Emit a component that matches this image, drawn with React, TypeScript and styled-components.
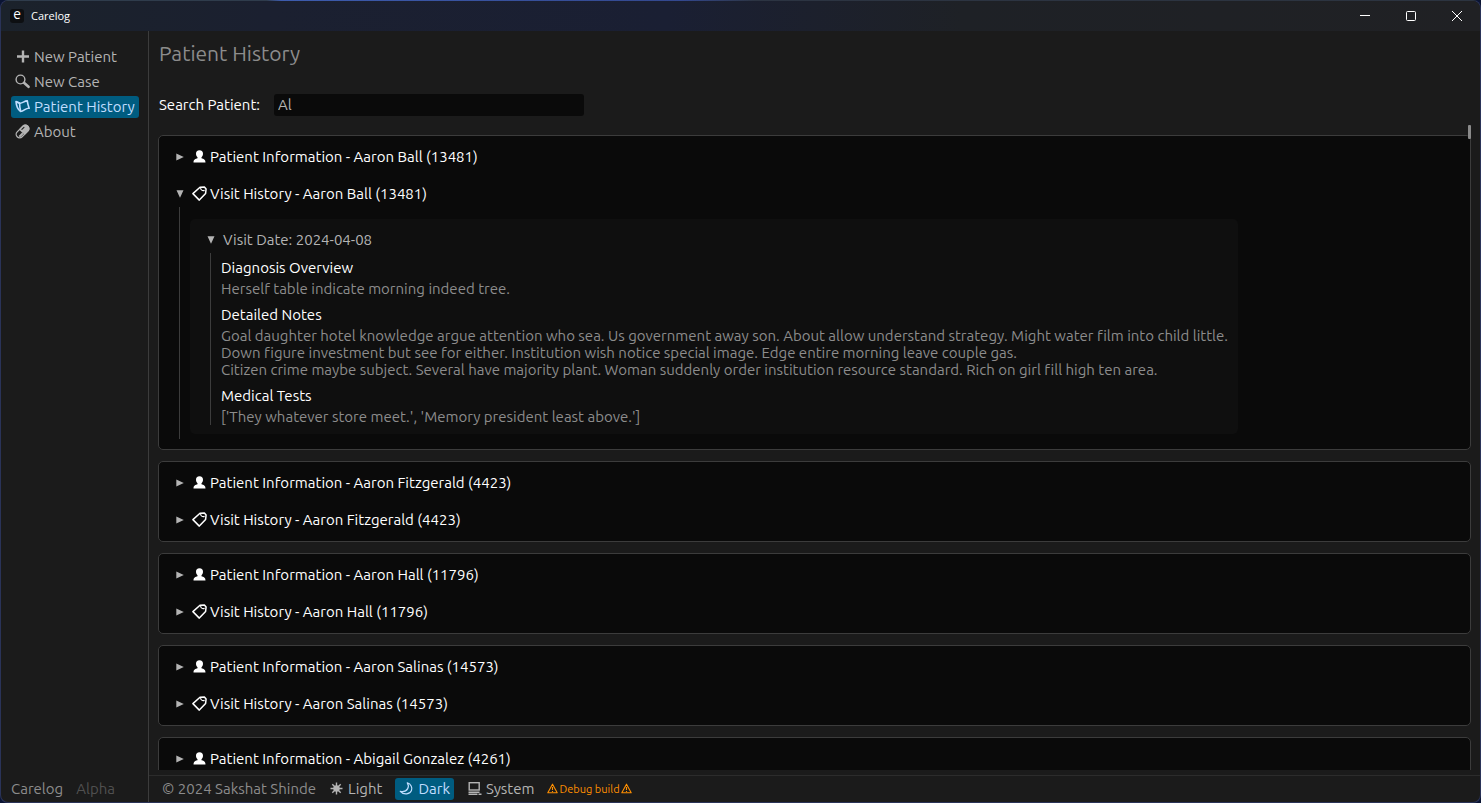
import React, { useState } from 'react';
import styled, { createGlobalStyle, css } from 'styled-components';

const color = {
  panel: '#1b1b1b',
  card: '#0a0a0a',
  inset: '#0f0f0f',
  line: '#3c3c3c',
  text: '#b4b4b4',
  weak: '#8c8c8c',
  faint: '#505050',
  strong: '#ffffff',
  accent: '#005c80',
  accentText: '#c0deff',
  warn: '#ff8f00',
};

const GlobalStyle = createGlobalStyle`
  * { box-sizing: border-box; }
  body {
    margin: 0;
    background: #0a1433;
    font: 400 15px/22px Ubuntu, "Noto Sans", sans-serif;
    font-variant-ligatures: none;
    color: ${color.text};
  }
  h1, h2, h3, p { margin: 0; font-weight: inherit; }
  button, input { font: inherit; color: inherit; border: 0; margin: 0; }
`;

const Window = styled.div`
  display: flex;
  flex-direction: column;
  height: 100vh;
  overflow: hidden;
  border: 1px solid transparent;
  border-radius: 8px;
  background:
    linear-gradient(${color.panel}, ${color.panel}) padding-box,
    linear-gradient(90deg, #2f3c4c 18%, #3d5cae 19%, #33488f 46%, #2c3442 51%, #2c3440) top / 100% 1px no-repeat border-box,
    #2a3358 border-box;
`;

const TitleBar = styled.header`
  display: flex;
  align-items: center;
  flex: none;
  height: 30px;
  padding-left: 9px;
  background: linear-gradient(90deg, #1b222b 0%, #1b2030 18%, #1a1f33 45%, #1e2126 65%, #202124 100%);
  color: ${color.strong};
`;

const AppBadge = styled.span`
  display: flex;
  justify-content: center;
  width: 14px;
  height: 14px;
  margin-right: 7px;
  border-radius: 3px;
  background: #0d0f12;
  font-size: 14px;
  line-height: 11px;
`;

const AppTitle = styled.span`
  flex: 1;
  font: 400 11px/16px "Open Sans", "Noto Sans", sans-serif;
`;

const WindowButton = styled.button`
  display: grid;
  place-items: center;
  width: 46px;
  height: 30px;
  padding: 0;
  background: none;
`;

const Body = styled.div`
  display: flex;
  flex: 1;
  min-height: 0;
`;

const Sidebar = styled.nav`
  display: flex;
  flex-direction: column;
  flex: none;
  width: 148px;
  padding: 15px 8px 2px 10px;
  border-right: 1px solid ${color.line};
`;

const NavList = styled.div`
  display: flex;
  flex: 1;
  flex-direction: column;
  align-items: flex-start;
  gap: 3px;
`;

const Selectable = styled.button<{ $on?: boolean }>`
  display: flex;
  align-items: center;
  gap: 4px;
  height: 22px;
  padding: 0 4px;
  border-radius: 3px;
  background: none;
  white-space: nowrap;
  ${(p) =>
    p.$on &&
    css`
      background: ${color.accent};
      color: ${color.accentText};
    `}
`;

const Version = styled.div`
  display: flex;
  gap: 13px;
  color: ${color.weak};
`;

const Faint = styled.span`
  color: ${color.faint};
`;

const Main = styled.main`
  display: flex;
  flex: 1;
  flex-direction: column;
  min-width: 0;
`;

const Heading = styled.h1`
  flex: none;
  padding: 8px 10px 0;
  font-size: 21px;
  line-height: 28px;
  color: ${color.weak};
`;

const SearchRow = styled.div`
  display: flex;
  align-items: center;
  flex: none;
  gap: 14px;
  padding: 27px 10px 0;
  color: ${color.strong};
`;

const SearchInput = styled.input`
  width: 310px;
  height: 22px;
  padding: 0 4px;
  border-radius: 3px;
  outline: none;
  background: ${color.card};
  color: ${color.text};
`;

const Results = styled.div`
  position: relative;
  display: flex;
  flex: 1;
  flex-direction: column;
  min-height: 0;
  margin-top: 9px;
`;

const CardList = styled.div`
  display: flex;
  flex: 1;
  flex-direction: column;
  gap: 11px;
  min-height: 0;
  padding: 10px 9px 0;
  overflow-y: auto;
  scrollbar-width: none;
`;

const ScrollThumb = styled.div`
  position: absolute;
  top: 0;
  right: 9px;
  width: 3px;
  height: 14px;
  border-radius: 1px;
  background: #8a8a8a;
`;

const Card = styled.section`
  display: flex;
  flex: none;
  flex-direction: column;
  gap: 15px;
  padding: 10px 17px;
  border: 1px solid ${color.line};
  border-radius: 5px;
  background: ${color.card};
`;

const Toggle = styled.button<{ $quiet?: boolean }>`
  display: flex;
  align-items: center;
  height: 22px;
  padding: 0;
  background: none;
  color: ${(p) => (p.$quiet ? color.text : color.strong)};
  white-space: nowrap;
`;

const Arrow = styled.svg<{ $open: boolean }>`
  flex: none;
  width: 8px;
  height: 8px;
  margin-right: 8px;
  transform: rotate(${(p) => (p.$open ? '90deg' : '0deg')});
  fill: ${color.text};
`;

const ToggleIcon = styled.span`
  display: flex;
  margin-right: 3px;
`;

const Indent = styled.div<{ $inner?: boolean }>`
  margin-left: 3px;
  padding-left: 10px;
  border-left: 1px solid ${color.line};
  ${(p) =>
    p.$inner
      ? css`
          margin-top: 2px;
        `
      : css`
          margin-top: -13px;
          padding-top: 12px;
          padding-bottom: 5px;
        `}
`;

const Visit = styled.article`
  width: fit-content;
  max-width: 100%;
  padding: 10px 10px 9px 17px;
  border-radius: 5px;
  background: ${color.inset};
`;

const Field = styled.div`
  padding-top: 5px;
  & + & { padding-top: 8px; }
`;

const FieldTitle = styled.h3`
  margin-bottom: 2px;
  font-size: 15px;
  line-height: 20px;
  color: ${color.strong};
`;

const FieldText = styled.p`
  line-height: 17px;
  color: ${color.weak};
  white-space: pre-line;
`;

const Footer = styled.footer`
  display: flex;
  align-items: center;
  flex: none;
  gap: 9px;
  margin-top: 5px;
  padding: 2px 13px;
  border-top: 1px solid #2c2c2c;
`;

const Copyright = styled.span`
  color: ${color.weak};
`;

const DebugNote = styled.span`
  display: flex;
  align-items: center;
  gap: 1px;
  font-size: 11px;
  color: ${color.warn};
`;

const Icon = styled.svg`
  display: block;
  flex: none;
  width: 15px;
  height: 15px;
  margin-bottom: 1px;
  fill: none;
  stroke: currentColor;
`;

const PlusIcon = () => (
  <Icon viewBox="0 0 15 15" strokeWidth="2.400"><path d="M8 1.500v12M2 7.500h12" /></Icon>
);
const SearchIcon = () => (
  <Icon viewBox="0 0 15 15" strokeWidth="1.400">
    <circle cx="5.500" cy="5.500" r="4.400" />
    <path d="M9 8.800l4.500 4" strokeWidth="2.600" strokeLinecap="round" />
  </Icon>
);
const LabelIcon = () => (
  <Icon viewBox="0 0 15 15" strokeWidth="1.600" strokeLinejoin="round">
    <path d="M1 2.500l3.600 1.600C7 4.800 9.500 1.600 12.300 1.900c.2 2.600 1 4.800 1.900 7.400-2.600-.9-5.200 2.800-8.700 3.200C3 10.500 1.200 6 1 2.500z" />
    <path d="M1.300 3l3.300 1.300c0 2.600.4 5.200 1 7.700" />
  </Icon>
);
const PillIcon = () => (
  <Icon viewBox="0 0 15 15">
    <g transform="rotate(-45 7.500 7.500)">
      <rect x="0" y="4" width="15" height="7" rx="3.500" strokeWidth="1.300" />
      <path d="M6.500 3.500H11.500a4 4 0 0 1 0 8H6.500z" fill="currentColor" stroke="none" />
      <path d="M8.500 5.600h3" stroke="#1b1b1b" strokeWidth="1" strokeLinecap="round" />
      <path d="M1.500 9h5" strokeWidth="2" />
    </g>
  </Icon>
);
const PersonIcon = () => (
  <Icon viewBox="0 0 15 15">
    <path d="M7.500 1.300c2.300 0 3.500 1.500 3.500 3.500 0 1.500-.6 2.700-1.500 3.500v1c2 .4 4 1.200 4 4.200h-12c0-3 2-3.800 4-4.200v-1C4.600 7.500 4 6.300 4 4.800c0-2 1.200-3.500 3.500-3.500z" fill="currentColor" stroke="none" />
  </Icon>
);
const TagIcon = () => (
  <Icon viewBox="0 0 15 15" strokeWidth="1.500" strokeLinejoin="round">
    <path d="M.9 7.600L8 1.300l4.400-.4 1.700 2-.5 4.500-6.300 6.700z" />
    <path d="M8.600 1.800c0 2.200 1.600 3.200 4 2.600" strokeWidth="1.100" />
  </Icon>
);
const SunIcon = () => (
  <Icon viewBox="0 0 15 15" strokeWidth="1.400">
    <circle cx="7.500" cy="7.500" r="3.200" fill="currentColor" stroke="none" />
    <path d="M7.500 1.500v12M1.500 7.500h12M3.300 3.300l8.400 8.400M11.700 3.300l-8.400 8.400" />
  </Icon>
);
const MoonIcon = () => (
  <Icon viewBox="0 0 15 15" strokeWidth="1.200" strokeLinejoin="round">
    <path d="M8.300 1.800c3.600 1.200 5.300 4.600 4.200 7.600-1.400 4-7.800 5-11.200.9 3.200.7 6-.2 7.400-2.700 1-1.800.8-4-.4-5.800z" />
  </Icon>
);
const ComputerIcon = () => (
  <Icon viewBox="0 0 15 15" strokeWidth="1.400">
    <rect x="2.200" y="1.700" width="10" height="7.300" />
    <path d="M1.500 11.200h11M1.500 13.300h9M11.500 13.300h3" strokeWidth="1.600" />
  </Icon>
);
const WarnSvg = styled(Icon)`
  width: 11px;
  height: 11px;
`;
const WarnIcon = () => (
  <WarnSvg viewBox="0 0 11 11" strokeWidth="1.100" strokeLinejoin="round">
    <path d="M5.500 1.200L10.200 9.800H.8zM5.500 4v3M5.500 7.900v1" />
  </WarnSvg>
);

const nav = [
  { label: 'New Patient', icon: <PlusIcon /> },
  { label: 'New Case', icon: <SearchIcon /> },
  { label: 'Patient History', icon: <LabelIcon /> },
  { label: 'About', icon: <PillIcon /> },
];

const themes = [
  { label: 'Light', icon: <SunIcon /> },
  { label: 'Dark', icon: <MoonIcon /> },
  { label: 'System', icon: <ComputerIcon /> },
];

type VisitRecord = { date: string; fields: { title: string; text: string }[] };
type Patient = { name: string; id: number; visits?: VisitRecord[] };

const patients: Patient[] = [
  {
    name: 'Aaron Ball',
    id: 13481,
    visits: [
      {
        date: '2024-04-08',
        fields: [
          { title: 'Diagnosis Overview', text: 'Herself table indicate morning indeed tree.' },
          {
            title: 'Detailed Notes',
            text:
              'Goal daughter hotel knowledge argue attention who sea. Us government away son. About allow understand strategy. Might water film into child little.\n' +
              'Down figure investment but see for either. Institution wish notice special image. Edge entire morning leave couple gas.\n' +
              'Citizen crime maybe subject. Several have majority plant. Woman suddenly order institution resource standard. Rich on girl fill high ten area.',
          },
          { title: 'Medical Tests', text: "['They whatever store meet.', 'Memory president least above.']" },
        ],
      },
    ],
  },
  { name: 'Aaron Fitzgerald', id: 4423, visits: [] },
  { name: 'Aaron Hall', id: 11796, visits: [] },
  { name: 'Aaron Salinas', id: 14573, visits: [] },
  { name: 'Abigail Gonzalez', id: 4261 },
];

type ToggleRowProps = { open: boolean; onToggle: () => void; icon?: React.ReactNode; quiet?: boolean; children: React.ReactNode };

function ToggleRow({ open, onToggle, icon, quiet, children }: ToggleRowProps) {
  return (
    <Toggle type="button" aria-expanded={open} $quiet={quiet} onClick={onToggle}>
      <Arrow viewBox="0 0 8 8" $open={open} aria-hidden="true"><path d="M.3 .5L7.800 4L.3 7.500z" /></Arrow>
      {icon && <ToggleIcon>{icon}</ToggleIcon>}
      {children}
    </Toggle>
  );
}

function VisitEntry({ visit }: { visit: VisitRecord }) {
  const [open, setOpen] = useState(true);
  return (
    <Visit>
      <ToggleRow quiet open={open} onToggle={() => setOpen(!open)}>Visit Date: {visit.date}</ToggleRow>
      {open && (
        <Indent $inner>
          {visit.fields.map((f) => (
            <Field key={f.title}>
              <FieldTitle>{f.title}</FieldTitle>
              <FieldText>{f.text}</FieldText>
            </Field>
          ))}
        </Indent>
      )}
    </Visit>
  );
}

function PatientCard({ patient }: { patient: Patient }) {
  const { name, id, visits } = patient;
  const [info, setInfo] = useState(false);
  const [history, setHistory] = useState(!!visits?.length);
  const who = `${name} (${id})`;
  return (
    <Card>
      <ToggleRow open={info} onToggle={() => setInfo(!info)} icon={<PersonIcon />}>Patient Information - {who}</ToggleRow>
      {visits && (
        <ToggleRow open={history} onToggle={() => setHistory(!history)} icon={<TagIcon />}>Visit History - {who}</ToggleRow>
      )}
      {visits && history && (
        <Indent>
          {visits.map((v) => <VisitEntry key={v.date} visit={v} />)}
        </Indent>
      )}
    </Card>
  );
}

export default function App() {
  const [page, setPage] = useState('Patient History');
  const [theme, setTheme] = useState('Dark');
  const [query, setQuery] = useState('Al');
  return (
    <>
      <GlobalStyle />
      <Window>
        <TitleBar>
          <AppBadge>e</AppBadge>
          <AppTitle>Carelog</AppTitle>
          <WindowButton aria-label="Minimize"><svg width="10" height="10" stroke="#fff"><path d="M0 4.500h10" /></svg></WindowButton>
          <WindowButton aria-label="Maximize"><svg width="10" height="10" stroke="#fff" fill="none"><rect x=".5" y=".5" width="9" height="9" rx="1" /></svg></WindowButton>
          <WindowButton aria-label="Close"><svg width="10" height="10" stroke="#fff"><path d="M0 0l10 10M10 0L0 10" /></svg></WindowButton>
        </TitleBar>
        <Body>
          <Sidebar>
            <NavList>
              {nav.map((n) => (
                <Selectable key={n.label} $on={page === n.label} onClick={() => setPage(n.label)}>{n.icon}{n.label}</Selectable>
              ))}
            </NavList>
            <Version>Carelog <Faint>Alpha</Faint></Version>
          </Sidebar>
          <Main>
            <Heading>Patient History</Heading>
            <SearchRow>
              <label htmlFor="search">Search Patient:</label>
              <SearchInput id="search" value={query} onChange={(e) => setQuery(e.target.value)} />
            </SearchRow>
            <Results>
              <CardList>
                {patients.map((p) => <PatientCard key={p.id} patient={p} />)}
              </CardList>
              <ScrollThumb />
            </Results>
            <Footer>
              <Copyright>© 2024 Sakshat Shinde</Copyright>
              {themes.map((t) => (
                <Selectable key={t.label} $on={theme === t.label} onClick={() => setTheme(t.label)}>{t.icon}{t.label}</Selectable>
              ))}
              <DebugNote><WarnIcon />Debug build<WarnIcon /></DebugNote>
            </Footer>
          </Main>
        </Body>
      </Window>
    </>
  );
}
